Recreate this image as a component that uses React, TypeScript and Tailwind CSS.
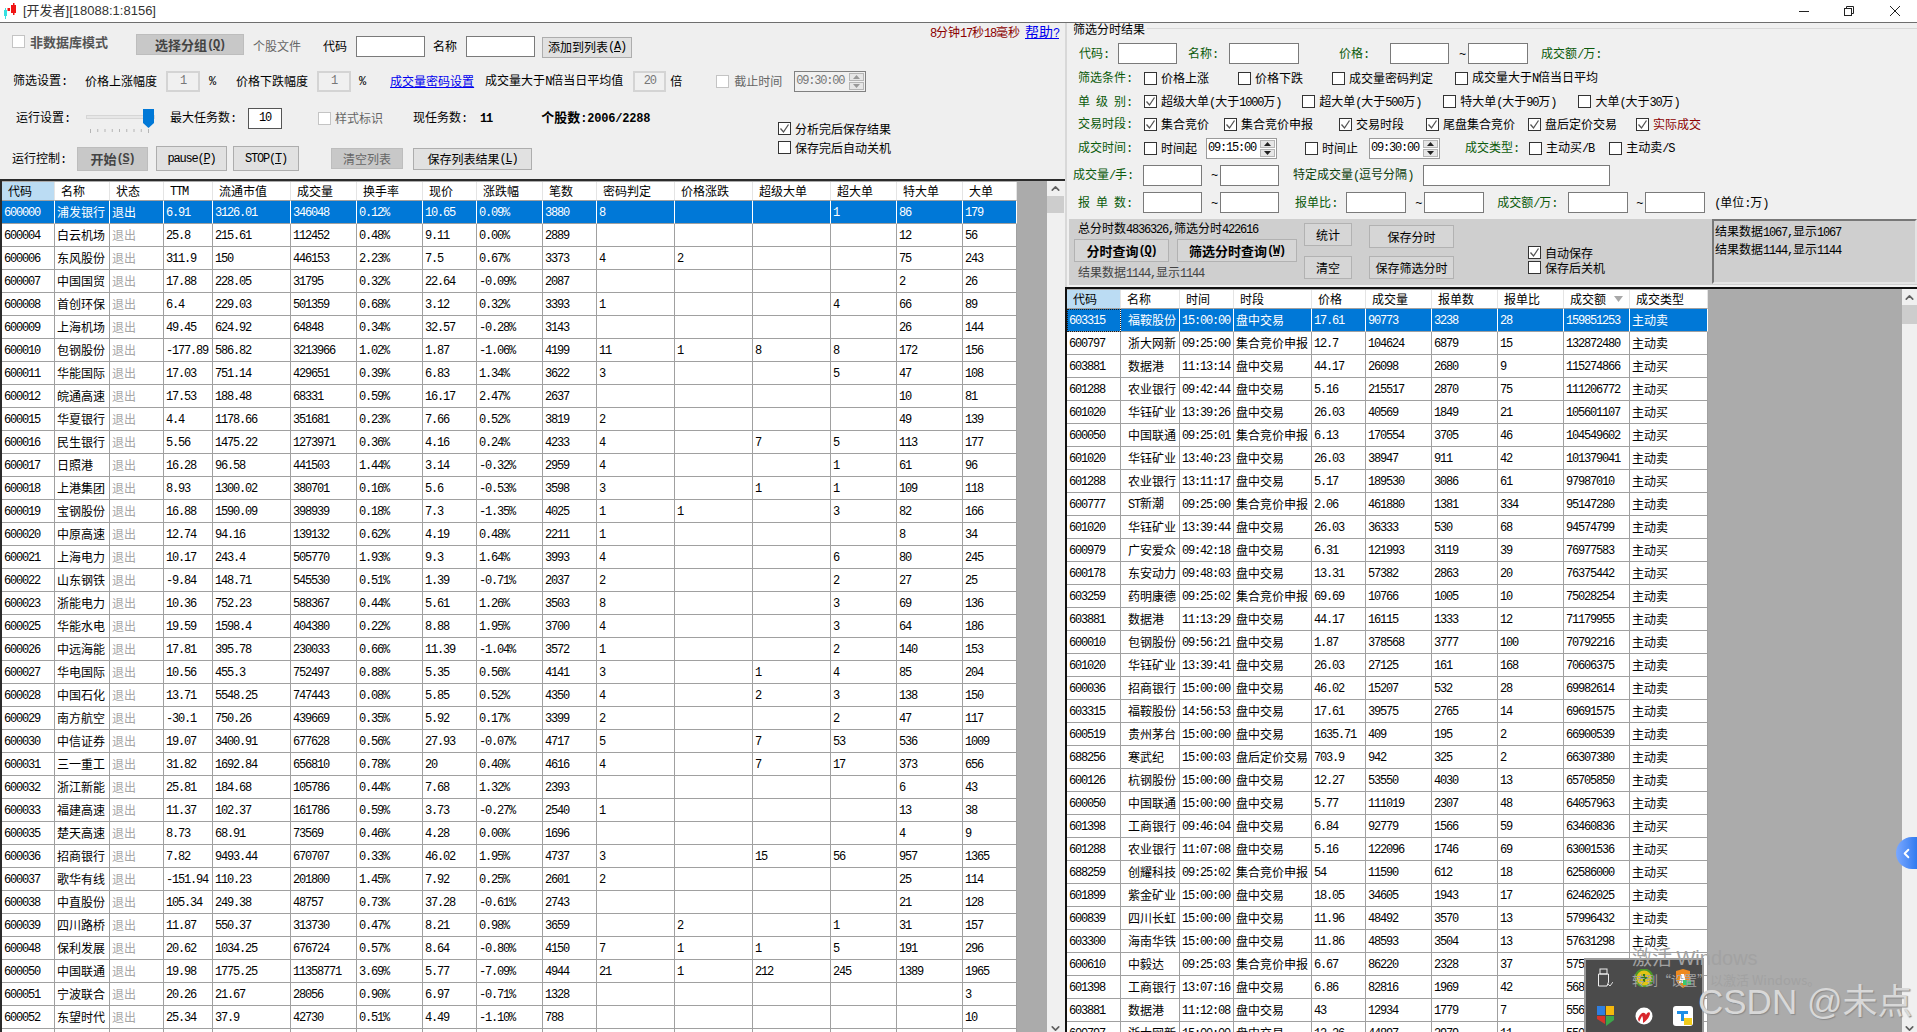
import clsx from "clsx";
import { ChevronDown, ChevronLeft, ChevronUp } from "lucide-react";

// half-width runs take a mono face squeezed to 6px per char, like the bitmap font of the app
const MONO = "font-['Liberation_Mono'] text-[12px] tracking-[-1.2px] whitespace-pre";

function Txt({ s }: { s: string }) {
  const parts = s.split(/([\x00-\x7f]+)/);
  return (
    <>
      {parts.map((p, i) =>
        i % 2 === 1 ? (
          <span key={i} className={MONO}>
            {p}
          </span>
        ) : (
          p
        )
      )}
    </>
  );
}

function L({ s, cls }: { s: string; cls?: string }) {
  return (
    <span className={clsx("shrink-0 whitespace-nowrap", cls)}>
      <Txt s={s} />
    </span>
  );
}

// green field caption on the right hand form
function G({ s, cls }: { s: string; cls?: string }) {
  return <L s={s} cls={clsx("text-[#0b5a0b]", cls)} />;
}

function Box({ cls, value }: { cls?: string; value?: string }) {
  return (
    <div
      className={clsx(
        "h-[21px] shrink-0 bg-white border border-[#7a7a7a] flex items-center justify-center",
        cls
      )}
    >
      {value && <Txt s={value} />}
    </div>
  );
}

function Off({ cls, value }: { cls?: string; value: string }) {
  return (
    <div
      className={clsx(
        "h-[21px] shrink-0 bg-[#f0f0f0] border-2 border-[#d4d4d4] text-[#777] flex items-center justify-center",
        cls
      )}
    >
      <Txt s={value} />
    </div>
  );
}

function Box13({ checked, off }: { checked?: boolean; off?: boolean }) {
  return (
    <span
      className={clsx(
        "w-[13px] h-[13px] shrink-0 bg-white border flex items-center justify-center",
        off ? "border-[#c4c4c4]" : "border-[#333]"
      )}
    >
      {checked && (
        <svg width="11" height="11" viewBox="0 0 11 11" fill="none">
          <path d="M1.5 5.5 L4.5 9 L9.5 1.5" stroke="#555" strokeWidth="1.3" />
        </svg>
      )}
    </span>
  );
}

function Ck({
  label,
  cls,
  labelCls,
  checked,
}: {
  label: string;
  cls?: string;
  labelCls?: string;
  checked?: boolean;
}) {
  return (
    <span className={clsx("flex items-center gap-[4px] shrink-0 whitespace-nowrap", cls)}>
      <Box13 checked={checked} />
      <span className={labelCls}>
        <Txt s={label} />
      </span>
    </span>
  );
}

function Btn({
  text,
  k,
  cls,
}: {
  text: string;
  k?: string;
  cls?: string;
}) {
  return (
    <button
      className={clsx(
        "shrink-0 border flex items-center justify-center whitespace-nowrap",
        cls
      )}
    >
      <Txt s={text} />
      {k && (
        <>
          <span className={MONO}>(</span>
          <span className={clsx(MONO, "underline")}>{k}</span>
          <span className={MONO}>)</span>
        </>
      )}
    </button>
  );
}

function TimeBox({ value, cls, off }: { value: string; cls?: string; off?: boolean }) {
  return (
    <div
      className={clsx(
        "h-[21px] shrink-0 border flex items-center justify-between pl-[1px] pr-[1px]",
        off ? "bg-[#f0f0f0] border-[#808080] text-[#777]" : "bg-white border-[#9a9a9a]",
        cls
      )}
    >
      <Txt s={value} />
      <div className="flex flex-col gap-[1px]">
        <div className="w-[15px] h-[8px] bg-[#e6e6e6] border border-[#b5b5b5] flex items-center justify-center">
          <svg width="7" height="4" viewBox="0 0 7 4">
            <path d="M3.5 0 L7 4 H0 Z" fill={off ? "#999" : "#222"} />
          </svg>
        </div>
        <div className="w-[15px] h-[8px] bg-[#e6e6e6] border border-[#b5b5b5] flex items-center justify-center">
          <svg width="7" height="4" viewBox="0 0 7 4">
            <path d="M0 0 H7 L3.5 4 Z" fill={off ? "#999" : "#222"} />
          </svg>
        </div>
      </div>
    </div>
  );
}

function Slider({ cls }: { cls?: string }) {
  return (
    <svg width="70" height="30" viewBox="0 0 70 30" className={clsx("shrink-0", cls)}>
      <rect x="0.5" y="12.5" width="68" height="3" fill="#e7e7e7" stroke="#d6d6d6" />
      <path d="M57 6 H68 V20 L62.5 25 L57 20 Z" fill="#0078d7" />
      {[0, 1, 2, 3, 4, 5, 6, 7, 8].map((i) => (
        <line key={i} x1={4.5 + i * 7.25} x2={4.5 + i * 7.25} y1="26" y2={i === 0 || i === 8 ? 30 : 29} stroke="#b5b5b5" />
      ))}
    </svg>
  );
}

function Scroll({ cls, thumb }: { cls?: string; thumb?: string }) {
  return (
    <div className={clsx("shrink-0 bg-[#f0f0f0] flex flex-col items-center", cls)}>
      <ChevronUp size={13} strokeWidth={3} className="text-[#606060] mt-[1px] shrink-0" />
      <div className={clsx("w-full bg-[#cdcdcd] mt-[1px] shrink-0", thumb)} />
      <div className="flex-1" />
      <ChevronDown size={13} strokeWidth={3} className="text-[#606060] mb-[-3px] shrink-0" />
    </div>
  );
}

const stocks = `600000|浦发银行|6.91|3126.01|346048|0.12%|10.65|0.09%|3880|8|||1|86|179
600004|白云机场|25.8|215.61|112452|0.48%|9.11|0.00%|2889|||||12|56
600006|东风股份|311.9|150|446153|2.23%|7.5|0.67%|3373|4|2|||75|243
600007|中国国贸|17.88|228.05|31795|0.32%|22.64|-0.09%|2087|||||2|26
600008|首创环保|6.4|229.03|501359|0.68%|3.12|0.32%|3393|1|||4|66|89
600009|上海机场|49.45|624.92|64848|0.34%|32.57|-0.28%|3143|||||26|144
600010|包钢股份|-177.89|586.82|3213966|1.02%|1.87|-1.06%|4199|11|1|8|8|172|156
600011|华能国际|17.03|751.14|429651|0.39%|6.83|1.34%|3622|3|||5|47|108
600012|皖通高速|17.53|188.48|68331|0.59%|16.17|2.47%|2637|||||10|81
600015|华夏银行|4.4|1178.66|351681|0.23%|7.66|0.52%|3819|2||||49|139
600016|民生银行|5.56|1475.22|1273971|0.36%|4.16|0.24%|4233|4||7|5|113|177
600017|日照港|16.28|96.58|441503|1.44%|3.14|-0.32%|2959|4|||1|61|96
600018|上港集团|8.93|1300.02|380701|0.16%|5.6|-0.53%|3598|3||1|1|109|118
600019|宝钢股份|16.88|1590.09|398939|0.18%|7.3|-1.35%|4025|1|1||3|82|166
600020|中原高速|12.74|94.16|139132|0.62%|4.19|0.48%|2211|1||||8|34
600021|上海电力|10.17|243.4|505770|1.93%|9.3|1.64%|3993|4|||6|80|245
600022|山东钢铁|-9.84|148.71|545530|0.51%|1.39|-0.71%|2037|2|||2|27|25
600023|浙能电力|10.36|752.23|588367|0.44%|5.61|1.26%|3503|8|||3|69|136
600025|华能水电|19.59|1598.4|404380|0.22%|8.88|1.95%|3700|4|||3|64|186
600026|中远海能|17.81|395.78|230033|0.66%|11.39|-1.04%|3572|1|||2|140|153
600027|华电国际|10.56|455.3|752497|0.88%|5.35|0.56%|4141|3||1|4|85|204
600028|中国石化|13.71|5548.25|747443|0.08%|5.85|0.52%|4350|4||2|3|138|150
600029|南方航空|-30.1|750.26|439669|0.35%|5.92|0.17%|3399|2|||2|47|117
600030|中信证券|19.07|3400.91|677628|0.56%|27.93|-0.07%|4717|5||7|53|536|1009
600031|三一重工|31.82|1692.84|656810|0.78%|20|0.40%|4616|4||7|17|373|656
600032|浙江新能|25.81|184.68|105786|0.44%|7.68|1.32%|2393|||||6|43
600033|福建高速|11.37|102.37|161786|0.59%|3.73|-0.27%|2540|1||||13|38
600035|楚天高速|8.73|68.91|73569|0.46%|4.28|0.00%|1696|||||4|9
600036|招商银行|7.82|9493.44|670707|0.33%|46.02|1.95%|4737|3||15|56|957|1365
600037|歌华有线|-151.94|110.23|201800|1.45%|7.92|0.25%|2601|2||||25|114
600038|中直股份|105.34|249.38|48757|0.73%|37.28|-0.61%|2743|||||21|128
600039|四川路桥|11.87|550.37|313730|0.47%|8.21|0.98%|3659||2||1|31|157
600048|保利发展|20.62|1034.25|676724|0.57%|8.64|-0.80%|4150|7|1|1|5|191|296
600050|中国联通|19.98|1775.25|11358771|3.69%|5.77|-7.09%|4944|21|1|212|245|1389|1965
600051|宁波联合|20.26|21.67|28056|0.90%|6.97|-0.71%|1328||||||3
600052|东望时代|25.34|37.9|42730|0.51%|4.49|-1.10%|788||||||10`
  .split("\n")
  .map((r) => r.split("|"));

const trades = `603315|福鞍股份|15:00:00|盘中交易|17.61|90773|3238|28|159851253|主动卖
600797|浙大网新|09:25:00|集合竞价申报|12.7|104624|6879|15|132872480|主动卖
603881|数据港|11:13:14|盘中交易|44.17|26098|2680|9|115274866|主动买
601288|农业银行|09:42:44|盘中交易|5.16|215517|2870|75|111206772|主动买
601020|华钰矿业|13:39:26|盘中交易|26.03|40569|1849|21|105601107|主动买
600050|中国联通|09:25:01|集合竞价申报|6.13|170554|3705|46|104549602|主动买
601020|华钰矿业|13:40:23|盘中交易|26.03|38947|911|42|101379041|主动卖
601288|农业银行|13:11:17|盘中交易|5.17|189530|3086|61|97987010|主动买
600777|ST新潮|09:25:00|集合竞价申报|2.06|461880|1381|334|95147280|主动卖
601020|华钰矿业|13:39:44|盘中交易|26.03|36333|530|68|94574799|主动卖
600979|广安爱众|09:42:18|盘中交易|6.31|121993|3119|39|76977583|主动买
600178|东安动力|09:48:03|盘中交易|13.31|57382|2863|20|76375442|主动买
603259|药明康德|09:25:02|集合竞价申报|69.69|10766|1005|10|75028254|主动卖
603881|数据港|11:13:29|盘中交易|44.17|16115|1333|12|71179955|主动卖
600010|包钢股份|09:56:21|盘中交易|1.87|378568|3777|100|70792216|主动卖
601020|华钰矿业|13:39:41|盘中交易|26.03|27125|161|168|70606375|主动卖
600036|招商银行|15:00:00|盘中交易|46.02|15207|532|28|69982614|主动卖
603315|福鞍股份|14:56:53|盘中交易|17.61|39575|2765|14|69691575|主动卖
600519|贵州茅台|15:00:00|盘中交易|1635.71|409|195|2|66900539|主动卖
688256|寒武纪|15:00:03|盘后定价交易|703.9|942|325|2|66307380|主动卖
600126|杭钢股份|15:00:00|盘中交易|12.27|53550|4030|13|65705850|主动卖
600050|中国联通|15:00:00|盘中交易|5.77|111019|2307|48|64057963|主动卖
601398|工商银行|09:46:04|盘中交易|6.84|92779|1566|59|63460836|主动买
601288|农业银行|11:07:08|盘中交易|5.16|122096|1746|69|63001536|主动买
688259|创耀科技|09:25:02|集合竞价申报|54|11590|612|18|62586000|主动买
601899|紫金矿业|15:00:00|盘中交易|18.05|34605|1943|17|62462025|主动卖
600839|四川长虹|15:00:00|盘中交易|11.96|48492|3570|13|57996432|主动卖
603300|海南华铁|15:00:00|盘中交易|11.86|48593|3504|13|57631298|主动卖
600610|中毅达|09:25:03|集合竞价申报|6.67|86220|2328|37|57508740|主动卖
601398|工商银行|13:07:16|盘中交易|6.86|82816|1969|42|56811760|主动卖
603881|数据港|11:12:08|盘中交易|43|12934|1779|7|55616200|主动买
600797|浙大网新|15:00:00|盘中交易|12.26|44897|2979|11|55043722|主动卖`
  .split("\n")
  .map((r) => r.split("|"));

const stockHead = ["代码", "名称", "状态", "TTM", "流通市值", "成交量", "换手率", "现价", "涨跌幅", "笔数", "密码判定", "价格涨跌", "超级大单", "超大单", "特大单", "大单"];
const stockCols = ["w-[53px]", "w-[55px]", "w-[54px]", "w-[49px]", "w-[78px]", "w-[66px]", "w-[66px]", "w-[54px]", "w-[66px]", "w-[54px]", "w-[78px]", "w-[78px]", "w-[78px]", "w-[66px]", "w-[66px]", "w-[54px]"];
const tradeHead = ["代码", "名称", "时间", "时段", "价格", "成交量", "报单数", "报单比", "成交额", "成交类型"];
const tradeCols = ["w-[54px]", "w-[59px]", "w-[54px]", "w-[78px]", "w-[54px]", "w-[66px]", "w-[66px]", "w-[66px]", "w-[66px]", "w-[78px]"];

function HeadCell({ text, first, sorted }: { text: string; first?: boolean; sorted?: boolean }) {
  return (
    <th
      className={clsx(
        "h-[19px] p-0 pl-[6px] font-normal text-left border-r border-b border-r-[#e4e4e4] border-b-[#a0a0a0] overflow-hidden whitespace-nowrap",
        first ? "bg-[#bbdcf3]" : "bg-white"
      )}
    >
      <span className="flex items-center justify-between pr-[6px]">
        <span>
          <Txt s={text} />
        </span>
        {sorted && (
          <svg width="9" height="6" viewBox="0 0 9 6">
            <path d="M0 0 H9 L4.5 6 Z" fill="#a8a8a8" />
          </svg>
        )}
      </span>
    </th>
  );
}

function Cell({
  text,
  sel,
  cls,
  focus,
}: {
  text: string;
  sel: boolean;
  cls?: string;
  focus?: boolean;
}) {
  return (
    <td
      className={clsx(
        "h-[23px] p-0 pl-[2px] border-r border-b border-b-[#a0a0a0] overflow-hidden whitespace-nowrap align-middle",
        sel ? "bg-[#0078d7] text-white border-r-white" : "bg-white border-r-[#a0a0a0]",
        focus && "outline-1 outline-dotted outline-[#1a1a1a] -outline-offset-1",
        cls
      )}
    >
      <Txt s={text} />
    </td>
  );
}

function StockTable() {
  return (
    <table className="table-fixed border-separate border-spacing-0 w-[1015px] leading-[14px]">
      <colgroup>
        {stockCols.map((c, i) => (
          <col key={i} className={c} />
        ))}
      </colgroup>
      <thead>
        <tr>
          {stockHead.map((h, i) => (
            <HeadCell key={h} text={h} first={i === 0} />
          ))}
        </tr>
      </thead>
      <tbody>
        {stocks.map((r, i) => {
          const sel = i === 0;
          return (
            <tr key={r[0]}>
              <Cell text={r[0]} sel={sel} />
              <Cell text={r[1]} sel={sel} />
              <Cell text="退出" sel={sel} cls={sel ? "" : "text-[#a6a6a6]"} />
              {r.slice(2).map((v, j) => (
                <Cell key={j} text={v} sel={sel} />
              ))}
            </tr>
          );
        })}
        <tr>
          {stockCols.map((_, i) => (
            <Cell key={i} text="" sel={false} />
          ))}
        </tr>
      </tbody>
    </table>
  );
}

function TradeTable() {
  return (
    <table className="table-fixed border-separate border-spacing-0 w-[641px] leading-[14px]">
      <colgroup>
        {tradeCols.map((c, i) => (
          <col key={i} className={c} />
        ))}
      </colgroup>
      <thead>
        <tr>
          {tradeHead.map((h, i) => (
            <HeadCell key={h} text={h} first={i === 0} sorted={h === "成交额"} />
          ))}
        </tr>
      </thead>
      <tbody>
        {trades.map((r, i) => (
          <tr key={i}>
            {r.map((v, j) => (
              <Cell
                key={j}
                text={v}
                sel={i === 0}
                focus={i === 0 && j === 0}
                cls={j === 1 ? "pl-[7px]" : ""}
              />
            ))}
          </tr>
        ))}
      </tbody>
    </table>
  );
}

function TitleBar() {
  return (
    <div className="h-[22px] shrink-0 bg-white flex items-center">
      <svg width="14" height="16" viewBox="0 0 14 16" className="ml-[3px] shrink-0">
        <rect x="8" y="2" width="5" height="8" fill="#f01414" />
        <rect x="10" y="0" width="1.5" height="12" fill="#f01414" />
        <rect x="4.5" y="5" width="2.5" height="3" fill="#f01414" />
        <rect x="1" y="7" width="3" height="6" fill="#35e0e0" />
        <rect x="2" y="5" width="1" height="11" fill="#35e0e0" />
      </svg>
      <span className="ml-[6px] text-[13px] text-[#333] whitespace-nowrap font-['Liberation_Sans','Noto_Sans_CJK_SC',sans-serif]">
        [开发者][18088:1:8156]
      </span>
      <div className="ml-auto flex items-center">
        <svg width="10" height="10" viewBox="0 0 10 10" className="mr-[35px]">
          <line x1="0" x2="10" y1="5.5" y2="5.5" stroke="#222" />
        </svg>
        <svg width="10" height="10" viewBox="0 0 10 10" fill="none" className="mr-[36px]">
          <rect x="0.5" y="2.5" width="7" height="7" stroke="#222" />
          <path d="M2.5 2.5 V0.5 H9.5 V7.5 H7.5" stroke="#222" />
        </svg>
        <svg width="10" height="10" viewBox="0 0 10 10" className="mr-[17px]">
          <path d="M0 0 L10 10 M10 0 L0 10" stroke="#222" />
        </svg>
      </div>
    </div>
  );
}

function LeftForm() {
  return (
    <div className="h-[156px] shrink-0 bg-[#efefef] pt-[11px] flex flex-col overflow-hidden">
      <div className="h-[24px] flex items-center shrink-0">
        <span className="ml-[12px] -mt-[9px]">
          <Box13 off />
        </span>
        <L s="非数据库模式" cls="ml-[5px] -mt-[9px] text-[13px] font-bold text-[#555]" />
        <Btn text="选择分组" k="Q" cls="ml-[28px] -mt-[3px] w-[108px] h-[21px] bg-[#c8c8c8] border-[#bdbdbd] font-bold text-[13px] text-[#444]" />
        <L s="个股文件" cls="ml-[9px] text-[#666]" />
        <L s="代码" cls="ml-[22px]" />
        <Box cls="ml-[9px] w-[69px]" />
        <L s="名称" cls="ml-[8px]" />
        <Box cls="ml-[9px] w-[69px]" />
        <Btn text="添加到列表" k="A" cls="ml-[7px] mt-[2px] w-[90px] h-[21px] bg-[#e1e1e1] border-[#adadad]" />
        <div className="ml-auto mr-[6px] self-start -mt-[10px] flex items-center gap-[5px]">
          <L s="8分钟17秒18毫秒" cls="text-[#8b0000]" />
          <span className="text-[#0000ee] underline text-[14px] whitespace-nowrap">
            <Txt s="帮助?" />
          </span>
        </div>
      </div>
      <div className="h-[24px] mt-[11px] flex items-center shrink-0">
        <L s="筛选设置:" cls="ml-[13px]" />
        <L s="价格上涨幅度" cls="ml-[18px]" />
        <Off value="1" cls="ml-[9px] w-[34px]" />
        <L s="%" cls="ml-[9px]" />
        <L s="价格下跌幅度" cls="ml-[21px]" />
        <Off value="1" cls="ml-[9px] w-[34px]" />
        <L s="%" cls="ml-[8px]" />
        <L s="成交量密码设置" cls="ml-[25px] text-[#0000ee] underline" />
        <L s="成交量大于N倍当日平均值" cls="ml-[11px]" />
        <Off value="20" cls="ml-[10px] w-[33px]" />
        <L s="倍" cls="ml-[4px]" />
        <span className="ml-[34px]">
          <Box13 off />
        </span>
        <L s="截止时间" cls="ml-[5px] text-[#666]" />
        <TimeBox value="09:30:00" off cls="ml-[12px] w-[72px]" />
      </div>
      <div className="flex shrink-0">
        <div className="w-[778px] shrink-0 flex flex-col">
          <div className="h-[24px] mt-[13px] flex items-center">
            <L s="运行设置:" cls="ml-[16px]" />
            <Slider cls="ml-[16px]" />
            <L s="最大任务数:" cls="ml-[14px]" />
            <Box value="10" cls="ml-[12px] w-[34px] border-[#555]" />
            <span className="ml-[36px]">
              <Box13 off />
            </span>
            <L s="样式标识" cls="ml-[4px] text-[#666]" />
            <L s="现任务数:" cls="ml-[30px]" />
            <span className="ml-[13px] font-bold">
              <Txt s="11" />
            </span>
            <span className="ml-[49px] font-bold text-[13px] whitespace-nowrap">
              个股数
              <span className="font-['Liberation_Mono'] text-[12px] tracking-[-0.2px]">:2006/2288</span>
            </span>
          </div>
          <div className="h-[25px] mt-[16px] flex items-center">
            <L s="运行控制:" cls="ml-[12px]" />
            <Btn text="开始" k="S" cls="ml-[11px] w-[71px] h-[24px] bg-[#c8c8c8] border-[#bdbdbd] font-bold text-[13px] text-[#444]" />
            <Btn text="pause" k="P" cls="ml-[8px] w-[71px] h-[25px] bg-[#e1e1e1] border-[#adadad]" />
            <Btn text="STOP" k="T" cls="ml-[6px] w-[66px] h-[25px] bg-[#e1e1e1] border-[#adadad]" />
            <Btn text="清空列表" cls="ml-[32px] w-[72px] h-[21px] bg-[#c8c8c8] border-[#bdbdbd] text-[#666]" />
            <Btn text="保存列表结果" k="L" cls="ml-[10px] w-[119px] h-[22px] bg-[#e1e1e1] border-[#adadad]" />
          </div>
        </div>
        <div className="pt-[26px] flex flex-col shrink-0">
          <Ck label="分析完后保存结果" checked cls="h-[19px]" />
          <Ck label="保存完后自动关机" cls="h-[19px]" />
        </div>
      </div>
    </div>
  );
}

function RightForm() {
  return (
    <div className="h-[196px] shrink-0 flex flex-col overflow-hidden">
      <div className="h-[11px] mb-[8px] flex items-center">
        <L s="筛选分时结果" cls="ml-[6px]" />
        <div className="flex-1 ml-[2px] h-px bg-[#d8d8d8]" />
      </div>
      <div className="h-[23px] flex items-center">
        <G s="代码:" cls="ml-[12px]" />
        <Box cls="ml-[9px] w-[59px]" />
        <G s="名称:" cls="ml-[11px]" />
        <Box cls="ml-[11px] w-[70px]" />
        <G s="价格:" cls="ml-[40px]" />
        <Box cls="ml-[21px] w-[59px]" />
        <L s="~" cls="ml-[10px]" />
        <Box cls="ml-[3px] w-[60px]" />
        <G s="成交额/万:" cls="ml-[13px]" />
      </div>
      <div className="h-[26px] flex items-center">
        <G s="筛选条件:" cls="ml-[11px]" />
        <Ck label="价格上涨" cls="ml-[12px]" />
        <Ck label="价格下跌" cls="ml-[29px]" />
        <Ck label="成交量密码判定" cls="ml-[29px]" />
        <Ck label="成交量大于N倍当日平均" cls="ml-[22px]" />
      </div>
      <div className="h-[21px] flex items-center">
        <G s="单 级 别:" cls="ml-[11px]" />
        <Ck label="超级大单(大于1000万)" checked cls="ml-[12px]" />
        <Ck label="超大单(大于500万)" cls="ml-[21px]" />
        <Ck label="特大单(大于90万)" cls="ml-[22px]" />
        <Ck label="大单(大于30万)" cls="ml-[22px]" />
      </div>
      <div className="h-[24px] flex items-center">
        <G s="交易时段:" cls="ml-[11px]" />
        <Ck label="集合竞价" checked cls="ml-[12px]" />
        <Ck label="集合竞价申报" checked cls="ml-[15px]" />
        <Ck label="交易时段" checked cls="ml-[26px]" />
        <Ck label="尾盘集合竞价" checked cls="ml-[22px]" />
        <Ck label="盘后定价交易" checked cls="ml-[13px]" />
        <Ck label="实际成交" checked cls="ml-[19px]" labelCls="text-[#8b0000]" />
      </div>
      <div className="h-[24px] flex items-center">
        <G s="成交时间:" cls="ml-[11px]" />
        <Ck label="时间起" cls="ml-[12px]" />
        <TimeBox value="09:15:00" cls="ml-[9px] w-[71px]" />
        <Ck label="时间止" cls="ml-[28px]" />
        <TimeBox value="09:30:00" cls="ml-[11px] w-[71px]" />
        <G s="成交类型:" cls="ml-[25px]" />
        <Ck label="主动买/B" cls="ml-[10px]" />
        <Ck label="主动卖/S" cls="ml-[15px]" />
      </div>
      <div className="h-[30px] flex items-center">
        <G s="成交量/手:" cls="ml-[6px]" />
        <Box cls="ml-[10px] w-[59px]" />
        <L s="~" cls="ml-[9px]" />
        <Box cls="ml-[3px] w-[59px]" />
        <L s="特定成交量(逗号分隔)" cls="ml-[14px] text-[#0b3d0b]" />
        <Box cls="ml-[10px] w-[187px]" />
      </div>
      <div className="h-[25px] flex items-center">
        <G s="报 单 数:" cls="ml-[11px]" />
        <Box cls="ml-[11px] w-[59px]" />
        <L s="~" cls="ml-[9px]" />
        <Box cls="ml-[3px] w-[59px]" />
        <G s="报单比:" cls="ml-[16px]" />
        <Box cls="ml-[9px] w-[60px]" />
        <L s="~" cls="ml-[9px]" />
        <Box cls="ml-[3px] w-[60px]" />
        <G s="成交额/万:" cls="ml-[13px]" />
        <Box cls="ml-[11px] w-[60px]" />
        <L s="~" cls="ml-[8px]" />
        <Box cls="ml-[3px] w-[60px]" />
        <L s="(单位:万)" cls="ml-[9px]" />
      </div>
    </div>
  );
}

const GRAY_BTN = "bg-[#d6d6d6] border-[#b2b2b2]";

function ResultBar() {
  return (
    <div className="h-[66px] shrink-0 ml-[2px] bg-[#cfcfcf] flex overflow-hidden">
      <div className="flex flex-col shrink-0 w-[228px]">
        <div className="h-[20px] pl-[9px] flex items-center">
          <L s="总分时数4836326,筛选分时422616" />
        </div>
        <div className="flex pl-[5px] h-[23px]">
          <Btn text="分时查询" k="Q" cls={clsx("w-[95px] h-[23px] font-bold text-[13px]", GRAY_BTN)} />
          <Btn text="筛选分时查询" k="W" cls={clsx("ml-[8px] w-[120px] h-[23px] font-bold text-[13px]", GRAY_BTN)} />
        </div>
        <div className="h-[22px] pl-[9px] flex items-center text-[#444]">
          <L s="结果数据1144,显示1144" />
        </div>
      </div>
      <div className="ml-[7px] pt-[4px] flex flex-col gap-[10px] shrink-0">
        <Btn text="统计" cls={clsx("w-[48px] h-[23px]", GRAY_BTN)} />
        <Btn text="清空" cls={clsx("w-[48px] h-[23px]", GRAY_BTN)} />
      </div>
      <div className="ml-[17px] pt-[6px] flex flex-col gap-[8px] shrink-0">
        <Btn text="保存分时" cls={clsx("w-[85px] h-[23px]", GRAY_BTN)} />
        <Btn text="保存筛选分时" cls={clsx("w-[85px] h-[23px]", GRAY_BTN)} />
      </div>
      <div className="ml-[74px] pt-[26px] flex flex-col shrink-0">
        <Ck label="自动保存" checked cls="h-[15px]" />
        <Ck label="保存后关机" cls="h-[15px]" />
      </div>
      <div className="ml-auto w-[205px] h-[65px] shrink-0 border-2 border-t-[#777] border-l-[#777] border-r-[#e4e4e4] border-b-[#e4e4e4] pl-[1px] pt-[2px] leading-[16px]">
        <div>
          <Txt s="结果数据1067,显示1067" />
        </div>
        <div>
          <Txt s="结果数据1144,显示1144" />
        </div>
      </div>
    </div>
  );
}

function TrayPopup() {
  return (
    <div className="absolute left-[1584px] top-[958px] w-[120px] h-[74px] overflow-hidden bg-[#4b4b4b] border-2 border-b-0 border-[#9a9a9a] grid grid-cols-3 grid-rows-[36px_40px] place-items-center">
      <svg width="16" height="20" viewBox="0 0 16 20" fill="none">
        <rect x="3" y="1" width="7" height="5" stroke="#eee" />
        <path d="M1.5 6 H11.5 V14 L10 18 H1.5 Z" stroke="#eee" />
        <path d="M11 16 L13 18 L16 14" stroke="#ddd" />
      </svg>
      <svg width="18" height="18" viewBox="0 0 18 18">
        <circle cx="9" cy="9" r="8.5" fill="#e3c416" />
        <circle cx="9" cy="9" r="8.5" fill="none" stroke="#4c9a2a" strokeWidth="2" />
        <path d="M5 9 H13 M9 5 V13" stroke="#2d7a1e" strokeWidth="2.2" />
      </svg>
      <svg width="16" height="19" viewBox="0 0 16 19">
        <path d="M1 2 L8 0 L15 2 V10 C15 14 11 17 8 19 C5 17 1 14 1 10 Z" fill="#ee8a1e" />
        <path d="M6 5 H9 L11 14 H4 Z" fill="#fff" />
        <rect x="8" y="11" width="8" height="5" fill="#3bc96b" />
      </svg>
      <svg width="17" height="20" viewBox="0 0 17 20">
        <rect x="0" y="0" width="8" height="9" fill="#2f7fe0" />
        <rect x="9" y="0" width="8" height="9" fill="#f5b80c" />
        <path d="M0 10 H8 V18 L0 13 Z" fill="#d8352a" />
        <path d="M9 10 H17 V14 L9 20 Z" fill="#3da64a" />
      </svg>
      <svg width="18" height="18" viewBox="0 0 18 18">
        <circle cx="9" cy="9" r="8.5" fill="#fff" />
        <path d="M3 12 C6 4 10 5 11 8 C12 5 15 4 15 7 C14 11 11 14 8 16 C8 12 8 10 7 9 C6 11 5 13 4 15 Z" fill="#d8262c" />
      </svg>
      <svg width="20" height="20" viewBox="0 0 20 20">
        <rect width="20" height="20" rx="3" fill="#fff" />
        <path d="M4 5 H15 V8 H11 V15 H8 V8 H4 Z" fill="#1c8ee6" />
        <rect x="11" y="12" width="8" height="7" fill="#f2cc1b" />
      </svg>
    </div>
  );
}

export default function App() {
  return (
    <div className="relative w-[1917px] h-[1032px] overflow-hidden flex flex-col bg-white text-black text-[12px] leading-[14px] font-['Noto_Sans_CJK_SC','Liberation_Sans',sans-serif]">
      <TitleBar />
      <div className="h-px shrink-0 bg-[#6e6e6e]" />
      <div className="flex-1 flex min-h-0">
        <div className="w-[1065px] shrink-0 flex flex-col min-h-0">
          <LeftForm />
          <div className="h-[2px] shrink-0 bg-[#2b2b2b]" />
          <div className="flex-1 flex min-h-0 bg-[#f0f0f0]">
            <div className="w-[1047px] shrink-0 border-l-2 border-[#2b2b2b] pt-[1px] bg-[#ababab] overflow-hidden">
              <StockTable />
            </div>
            <Scroll cls="w-[17px]" thumb="h-[17px]" />
          </div>
        </div>
        <div className="w-[852px] shrink-0 flex flex-col min-h-0 bg-[#f0f0f0]">
          <div className="border-l-2 border-[#d8d8d8] flex flex-col">
            <RightForm />
            <ResultBar />
            <div className="h-[2px] shrink-0" />
          </div>
          <div className="h-[2px] shrink-0 bg-[#111]" />
          <div className="flex-1 flex min-h-0 pt-px">
            <div className="w-[837px] shrink-0 -mt-px border-l-2 border-[#111] pt-px bg-[#ababab] overflow-hidden">
              <TradeTable />
            </div>
            <Scroll cls="w-[15px]" thumb="h-[19px]" />
          </div>
        </div>
      </div>

      <TrayPopup />

      {/* browser side tab */}
      <div className="absolute right-0 top-[837px] w-[21px] h-[32px] rounded-l-[16px] bg-gradient-to-r from-[#7aa8ff] to-[#2f7bf0] flex items-center justify-center">
        <ChevronLeft size={15} strokeWidth={3} className="text-white" />
      </div>

      {/* activation + blog watermarks */}
      <div className="absolute left-[1632px] top-[945px] text-[20px] leading-[24px] text-[#a2a2a2] font-['Noto_Sans_CJK_SC',sans-serif] whitespace-nowrap">
        激活 <span className="font-['Liberation_Sans']">Windows</span>
      </div>
      <div className="absolute left-[1632px] top-[972px] text-[13px] leading-[16px] text-[#a2a2a2] whitespace-nowrap">
        转到“设置”以激活 Windows。
      </div>
      <div className="absolute left-[1698px] top-[981px] text-[35px] leading-[42px] text-[#d8d8d8] [text-shadow:1px_1px_1px_#8a8a8a] font-['Liberation_Sans','Noto_Sans_CJK_SC',sans-serif] whitespace-nowrap">
        CSDN @未点
      </div>
    </div>
  );
}
